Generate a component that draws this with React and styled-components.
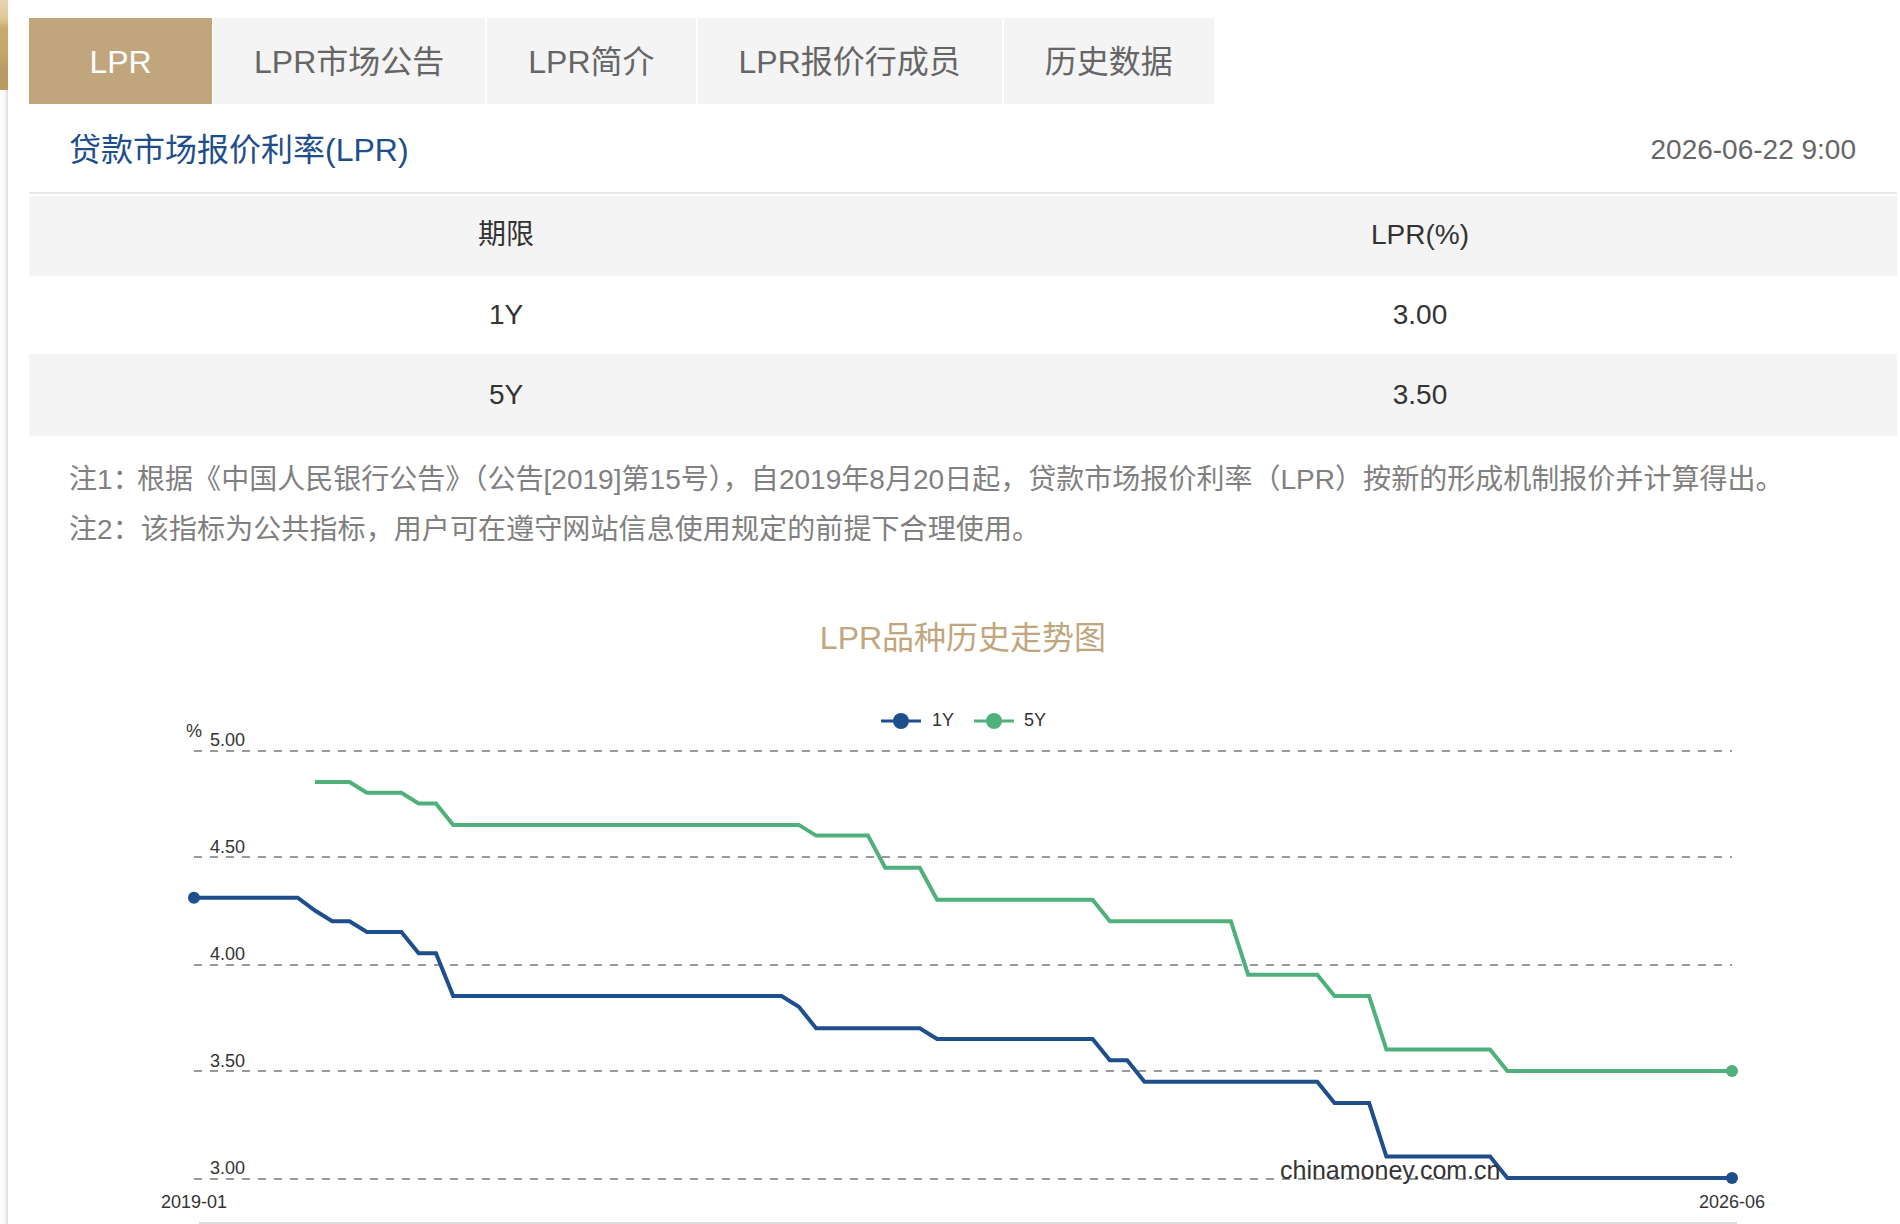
import styled, { createGlobalStyle } from 'styled-components'

const GlobalStyle = createGlobalStyle`
  html, body {
    margin: 0;
    padding: 0;
    background: #fff;
  }
  body {
    font-family: "Liberation Sans", "Noto Sans CJK SC", sans-serif;
  }
`

const Page = styled.div`
  display: flex;
  width: 1900px;
  height: 1224px;
  overflow: hidden;
`

const Rail = styled.div`
  width: 8px;
  flex-shrink: 0;
  background: linear-gradient(90deg, #fdfdfd 0%, #f7f7f9 60%, #dcdce0 100%);
`

const RailPicture = styled.div`
  height: 90px;
  background: linear-gradient(180deg, #e6d3b2 0%, #e0c898 20%, #c9aa6c 32%, #c6a56a 60%, #b89a68 80%, #bd9a60 100%);
`

const Panel = styled.main`
  flex: 1;
  min-width: 0;
  padding: 18px 3px 0 21px;
`

const Tabs = styled.nav`
  display: flex;
  gap: 2px;
`

const Tab = styled.div`
  height: 86px;
  line-height: 88px;
  min-width: ${p => (p.$active ? '183px' : '0')};
  margin-right: ${p => (p.$active ? '-1px' : '0')};
  padding: 0 41px;
  box-sizing: border-box;
  text-align: center;
  font-size: 32px;
  color: ${p => (p.$active ? '#fff' : '#666')};
  background: ${p => (p.$active ? '#c1a67d' : '#f4f4f4')};
`

const Header = styled.header`
  height: 88px;
  padding: 0 41px 0 40px;
  display: flex;
  align-items: center;
  justify-content: space-between;
  border-bottom: 2px solid #e9e9e9;
  margin-bottom: 2px;
`

const Heading = styled.h2`
  margin: 0;
  padding-top: 3px;
  font-size: 32px;
  line-height: 40px;
  font-weight: 400;
  color: #1f4e8c;
`

const Stamp = styled.span`
  padding-top: 4px;
  font-size: 28px;
  line-height: 36px;
  color: #666;
`

const Row = styled.div`
  display: grid;
  grid-template-columns: 954px 1fr;
  height: ${p => p.$height}px;
  align-items: center;
  text-align: center;
  font-size: 28px;
  line-height: 36px;
  color: #333;
  background: ${p => (p.$shaded ? '#f4f4f4' : '#fff')};
`

const HeadRow = styled(Row)`
  padding-bottom: 3px;
  box-sizing: border-box;
`

const RateCell = styled.div`
  padding-right: 40px;
`

const Notes = styled.div`
  margin-top: 19px;
  padding-left: 40px;
  font-size: 28px;
  line-height: 50px;
  color: #808080;
  white-space: nowrap;
  text-spacing-trim: trim-all;
`

const NoteLine = styled.div`
  letter-spacing: ${p => p.$tracking || 0}px;
`

const TightColon = styled.span`
  letter-spacing: -3.6px;
`

const ChartTitle = styled.h3`
  margin: 61px 0 44px;
  height: 44px;
  line-height: 44px;
  text-align: center;
  font-size: 32px;
  font-weight: 400;
  color: #c1a67d;
`

const ChartSvg = styled.svg`
  display: block;
  width: 1868px;
  height: 520px;
  font-family: "Liberation Sans", sans-serif;
`

const BLUE = '#1f4e8c'
const GREEN = '#4fb07b'
const X0 = 194
const STEP = 1538 / 89
const toX = i => X0 + i * STEP
const toY = v => 1178 - (v - 3) * 214

// [month index, rate], flat between listed points
const oneYear = [[0, 4.31], [6, 4.31], [7, 4.25], [8, 4.2], [9, 4.2], [10, 4.15], [12, 4.15], [13, 4.05], [14, 4.05], [15, 3.85], [34, 3.85], [35, 3.8], [36, 3.7], [42, 3.7], [43, 3.65], [52, 3.65], [53, 3.55], [54, 3.55], [55, 3.45], [65, 3.45], [66, 3.35], [68, 3.35], [69, 3.1], [75, 3.1], [76, 3], [89, 3]]
const fiveYear = [[7, 4.85], [9, 4.85], [10, 4.8], [12, 4.8], [13, 4.75], [14, 4.75], [15, 4.65], [35, 4.65], [36, 4.6], [39, 4.6], [40, 4.45], [42, 4.45], [43, 4.3], [52, 4.3], [53, 4.2], [60, 4.2], [61, 3.95], [65, 3.95], [66, 3.85], [68, 3.85], [69, 3.6], [75, 3.6], [76, 3.5], [89, 3.5]]

const toPoints = data => data.map(([i, v]) => `${toX(i)},${toY(v)}`).join(' ')

const ticks = [
  { label: '5.00', y: 751, textY: 746 },
  { label: '4.50', y: 857, textY: 853 },
  { label: '4.00', y: 965, textY: 960 },
  { label: '3.50', y: 1071, textY: 1067 },
  { label: '3.00', y: 1179, textY: 1174 },
]

function Chart() {
  return (
    <ChartSvg viewBox="29 704 1868 520">
      {ticks.map(t => (
        <g key={t.label}>
          <line x1={X0} x2={1732} y1={t.y} y2={t.y} stroke="#999" strokeWidth="2" strokeDasharray="8 8" />
          <text x="210" y={t.textY} fontSize="18" fill="#333">{t.label}</text>
        </g>
      ))}
      <text x="186" y="737" fontSize="18" fill="#333">%</text>

      <line x1="881" x2="921" y1="721" y2="721" stroke={BLUE} strokeWidth="3" />
      <circle cx="901" cy="721" r="8" fill={BLUE} />
      <text x="932" y="726" fontSize="18" fill="#333">1Y</text>
      <line x1="974" x2="1014" y1="721" y2="721" stroke={GREEN} strokeWidth="3" />
      <circle cx="994" cy="721" r="8" fill={GREEN} />
      <text x="1024" y="726" fontSize="18" fill="#333">5Y</text>

      <polyline points={toPoints(fiveYear)} fill="none" stroke={GREEN} strokeWidth="4" />
      <polyline points={toPoints(oneYear)} fill="none" stroke={BLUE} strokeWidth="4" />
      <circle cx={toX(0)} cy={toY(4.31)} r="6" fill={BLUE} />
      <circle cx={toX(89)} cy={toY(3.5)} r="6" fill={GREEN} />
      <circle cx={toX(89)} cy={toY(3)} r="6" fill={BLUE} />

      <text x="1280" y="1179" fontSize="25" fill="#333">chinamoney.com.cn</text>
      <text x="194" y="1208" fontSize="18" fill="#333" textAnchor="middle">2019-01</text>
      <text x="1732" y="1208" fontSize="18" fill="#333" textAnchor="middle">2026-06</text>
      <line x1="199" x2="1737" y1="1223" y2="1223" stroke="#ddd" strokeWidth="2" />
    </ChartSvg>
  )
}

const tabs = ['LPR', 'LPR市场公告', 'LPR简介', 'LPR报价行成员', '历史数据']

export default function App() {
  return (
    <Page>
      <GlobalStyle />
      <Rail>
        <RailPicture />
      </Rail>
      <Panel>
        <Tabs>
          {tabs.map((t, i) => (
            <Tab key={t} $active={i === 0}>{t}</Tab>
          ))}
        </Tabs>
        <Header>
          <Heading>贷款市场报价利率(LPR)</Heading>
          <Stamp>2026-06-22 9:00</Stamp>
        </Header>
        <HeadRow $shaded $height={80}><div>期限</div><RateCell>LPR(%)</RateCell></HeadRow>
        <Row $height={78}><div>1Y</div><RateCell>3.00</RateCell></Row>
        <Row $shaded $height={82}><div>5Y</div><RateCell>3.50</RateCell></Row>
        <Notes>
          <NoteLine $tracking={0.03}>注1<TightColon>：</TightColon>根据《中国人民银行公告》（公告[2019]第15号），自2019年8月20日起，贷款市场报价利率（LPR）按新的形成机制报价并计算得出。</NoteLine>
          <NoteLine $tracking={0.1}>注2：该指标为公共指标，用户可在遵守网站信息使用规定的前提下合理使用。</NoteLine>
        </Notes>
        <ChartTitle>LPR品种历史走势图</ChartTitle>
        <Chart />
      </Panel>
    </Page>
  )
}
